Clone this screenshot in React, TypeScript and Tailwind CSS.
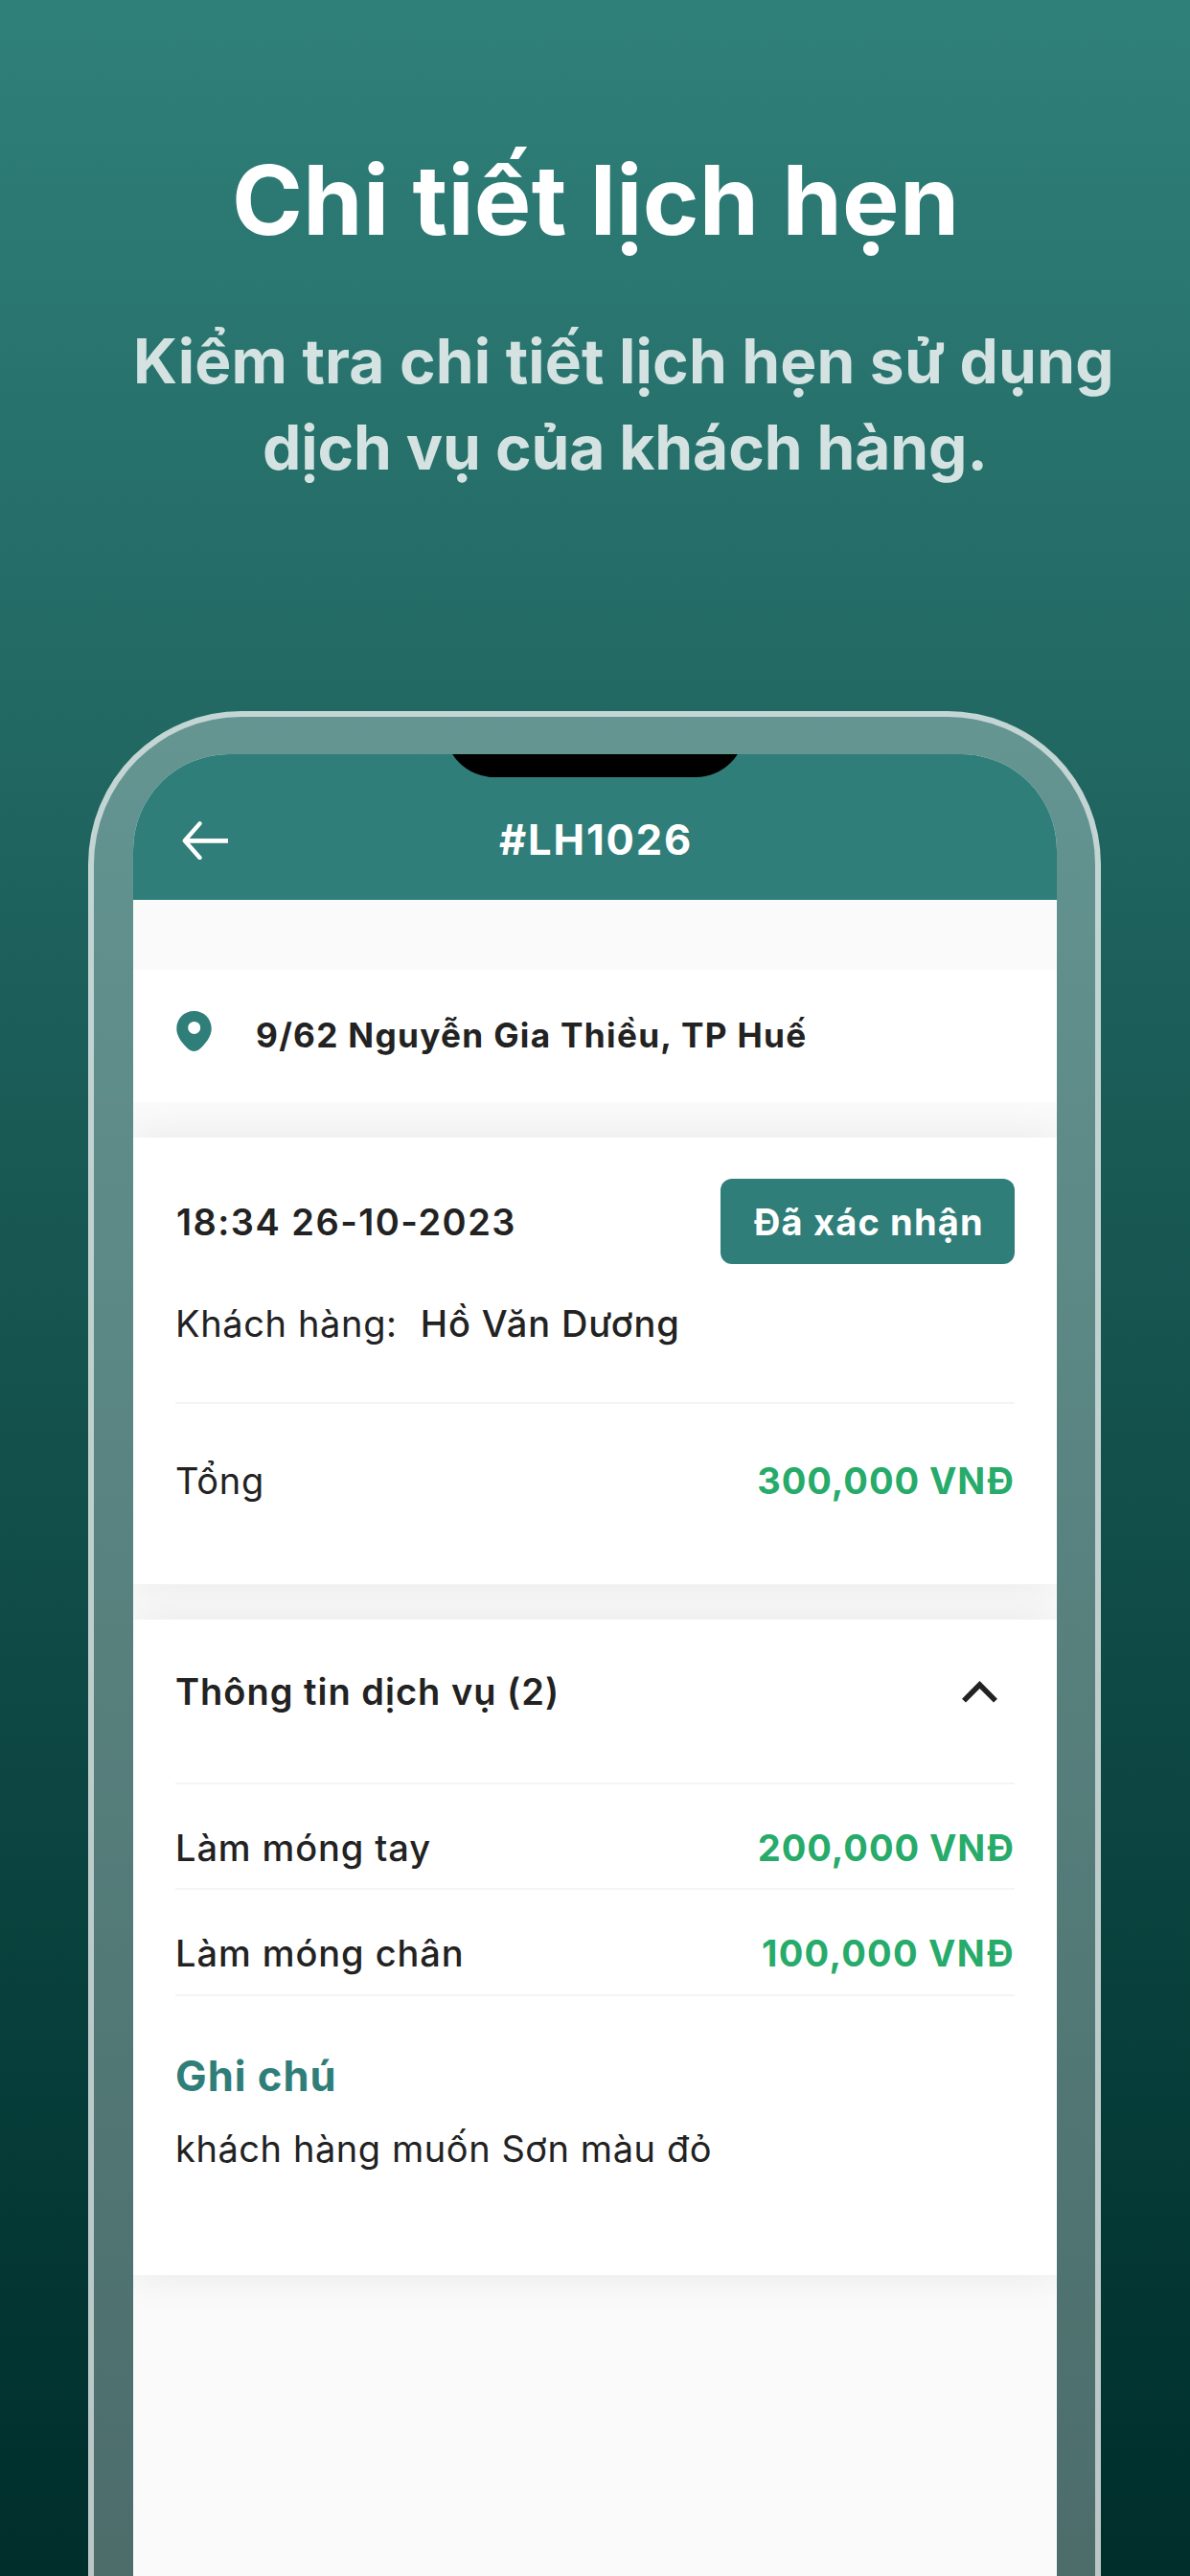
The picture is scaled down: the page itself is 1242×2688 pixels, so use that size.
import type { ReactNode } from "react";

function BackArrow() {
  return (
    <svg width="48" height="40" viewBox="0 0 48 40" fill="none" stroke="#fff" strokeWidth="4.7">
      <path d="M3 20.3H48" />
      <path d="M18.5 2.4L2.8 20.3L18.5 38" strokeWidth="4.4" strokeLinecap="round" strokeLinejoin="round" />
    </svg>
  );
}

function PinIcon() {
  return (
    <svg width="37" height="42" viewBox="0 0 37 42">
      <path
        fillRule="evenodd"
        fill="#2f7e79"
        d="M18.5 0C8 0 0.3 8.2 0.3 18.2C0.3 25.5 4.6 31.2 9.3 36.6C12.6 40.2 14.6 42 18.5 42C22.4 42 24.4 40.2 27.7 36.6C32.4 31.2 36.7 25.5 36.7 18.2C36.7 8.2 29 0 18.5 0ZM18.7 10.9A6.5 6.5 0 1 1 18.7 23.9A6.5 6.5 0 1 1 18.7 10.9Z"
      />
    </svg>
  );
}

function ChevronUp() {
  return (
    <svg width="37" height="23" viewBox="0 0 37 23" fill="none" stroke="#222" strokeWidth="5.6">
      <path d="M2 20.6L18.5 4L35 20.6" />
    </svg>
  );
}

function Divider({ className }: { className: string }) {
  return <div className={`h-[2px] bg-[#f4f4f5] ${className}`} />;
}

function Card({ className, children }: { className: string; children: ReactNode }) {
  return (
    <section className={`flex flex-col bg-white px-11 shadow-[0_0_40px_rgba(0,0,0,0.08)] ${className}`}>
      {children}
    </section>
  );
}

function Row({ className, children }: { className: string; children: ReactNode }) {
  return <div className={`flex h-12 items-center justify-between ${className}`}>{children}</div>;
}

function Price({ className, children }: { className: string; children: ReactNode }) {
  return <span className={`font-bold text-[#27ab6a] ${className}`}>{children}</span>;
}

export default function App() {
  return (
    <main className="flex h-[2688px] w-[1242px] flex-col overflow-hidden bg-linear-to-b from-[#30807a] to-[#002e2b] font-['Inter','Noto_Sans',sans-serif] whitespace-nowrap">
      <h1 className="mt-[139px] pl-[242px] text-[100px] leading-[140px] font-bold tracking-[0.35px] text-white">
        Chi tiết lịch hẹn
      </h1>
      <p className="mt-[53px] pl-[139px] text-[64px] leading-[90px] font-bold text-white/80">
        <span className="block tracking-[0.17px]">Kiểm tra chi tiết lịch hẹn sử dụng</span>
        <span className="block pl-[135px] tracking-[-0.1px]">dịch vụ của khách hàng.</span>
      </p>

      <div className="mt-[230px] ml-[92px] h-[2100px] w-[1057px] shrink-0 rounded-t-[160px] border-6 border-white/61 bg-white/30 pt-[39px] pr-[40px] pl-[41px]">
        <div className="relative flex h-full flex-col overflow-hidden rounded-t-[100px] bg-[#fafafa] text-[38px] text-[#222]">
          <div className="absolute -top-[80px] left-[325px] h-[104px] w-[314px] rounded-[52px] bg-black" />
          <header className="flex h-[152px] shrink-0 items-center bg-[#2f7e79] pt-[28px] pl-[51px]">
            <BackArrow />
            <span className="ml-[283px] text-[43.5px] font-bold tracking-[1.87px] text-white">#LH1026</span>
          </header>

          <section className="mt-[73px] flex h-[138px] shrink-0 items-center bg-white pb-[2px] pl-[45px]">
            <div className="mb-[9px]">
              <PinIcon />
            </div>
            <span className="ml-[46px] text-[35.2px] font-bold tracking-[1.3px]">
              9/62 Nguyễn Gia Thiều, TP Huế
            </span>
          </section>

          <Card className="mt-[37px] h-[466px] shrink-0">
            <div className="mt-[43px] flex h-[89px] items-center justify-between">
              <span className="pt-px pl-px font-semibold tracking-[1.45px]">18:34 26-10-2023</span>
              <span className="flex h-[89px] w-[307px] items-center rounded-xl bg-[#2f7e79] pt-px pl-[35px] font-bold tracking-[1.17px] text-white">
                Đã xác nhận
              </span>
            </div>
            <div className="mt-[38px] flex h-12 items-center">
              <span className="tracking-[0.63px]">Khách hàng:</span>
              <span className="ml-6 font-medium tracking-[0.93px]">Hồ Văn Dương</span>
            </div>
            <Divider className="mt-[58px]" />
            <Row className="mt-14">
              <span className="tracking-[0.7px]">Tổng</span>
              <Price className="tracking-[0.95px]">300,000 VNĐ</Price>
            </Row>
          </Card>

          <Card className="mt-[37px] h-[684px] shrink-0">
            <Row className="mt-[51px] pr-[18px]">
              <span className="font-semibold tracking-[1px]">Thông tin dịch vụ (2)</span>
              <ChevronUp />
            </Row>
            <Divider className="mt-[71px]" />
            <Row className="mt-[42px]">
              <span className="font-medium tracking-[0.9px]">Làm móng tay</span>
              <Price className="tracking-[0.95px]">200,000 VNĐ</Price>
            </Row>
            <Divider className="mt-[18px]" />
            <Row className="mt-[42px]">
              <span className="font-medium tracking-[0.94px]">Làm móng chân</span>
              <Price className="tracking-[1.25px]">100,000 VNĐ</Price>
            </Row>
            <Divider className="mt-[19px]" />
            <h2 className="mt-14 text-[43.5px] leading-[54px] font-bold tracking-[1px] text-[#2f7e79]">
              Ghi chú
            </h2>
            <p className="mt-[25px] leading-[48px] tracking-[0.56px]">khách hàng muốn Sơn màu đỏ</p>
          </Card>
        </div>
      </div>
    </main>
  );
}
